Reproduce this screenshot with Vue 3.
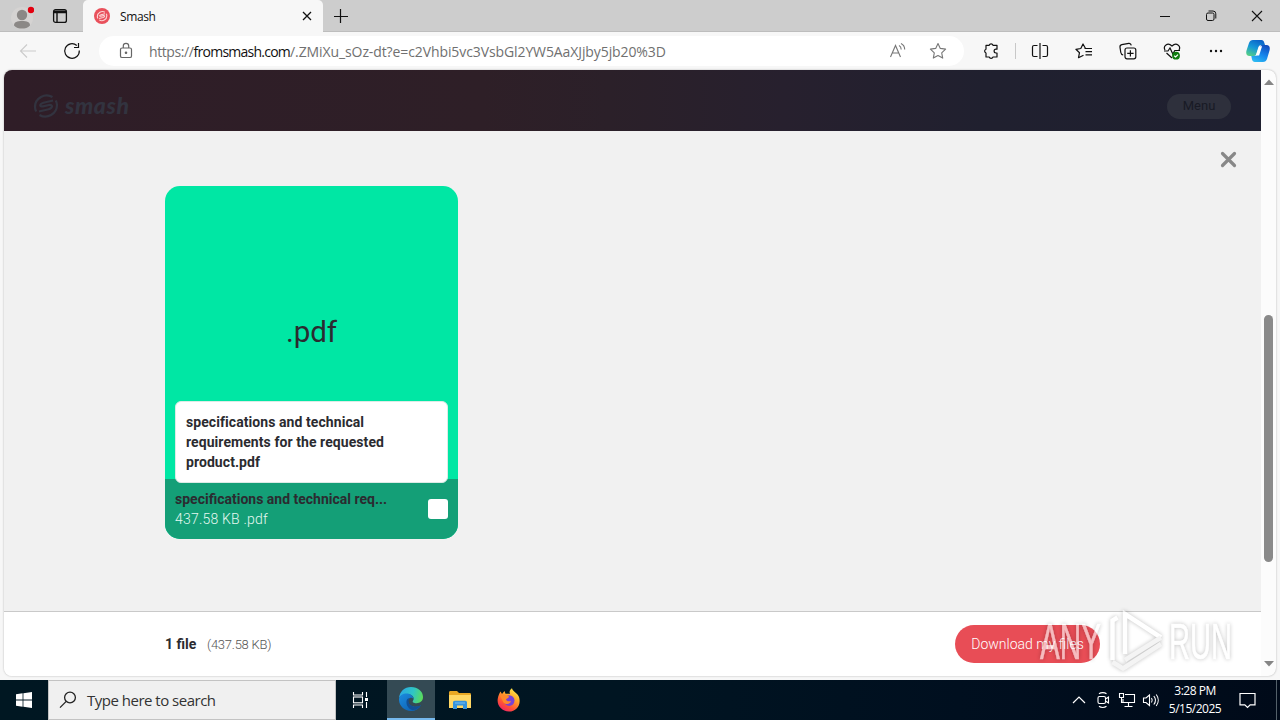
<template>
  <div class="desktop">
    <div class="titlebar">
      <div class="profile">
        <svg width="24" height="28" viewBox="0 0 24 28">
          <circle cx="12" cy="16" r="11" fill="#d5d3d2" />
          <circle cx="12" cy="13" r="5.2" fill="#8b8886" />
          <path d="M4 23.5c0-3.500 3-4.500 8-4.500s8 1 8 4.500c-2 2.500-5 3-8 3s-6-.5-8-3z" fill="#8b8886" />
          <circle cx="21" cy="8" r="3.200" fill="#e3000f" />
        </svg>
      </div>
      <div class="tab-actions">
        <svg width="16" height="16" viewBox="0 0 16 16" fill="none" stroke="#111" stroke-width="1.300">
          <rect x="1.600" y="1.600" width="12.800" height="12.800" rx="2" />
          <path d="M2 3.200h12M2 4.500h12M5 5v9" stroke-width="1.400" />
        </svg>
      </div>
      <div class="tab">
        <svg class="favicon" width="16" height="16" viewBox="0 0 16 16">
          <circle cx="8" cy="8" r="8" fill="#e9505b" />
          <g transform="translate(2.500 2.500) scale(.43)" fill="none" stroke="#fbd5d5" stroke-width="2.600">
            <path d="M19.500 4C12-.5 2 5 2 14c0 1.800.5 3.200 1.300 4.500M6.500 22C14 26.500 24 21 24 12c0-1.800-.5-3.200-1.300-4.500" />
            <path d="M20 7.500l-9.500 2.300C6 11 6.500 14 10 13.300l6-1.300c4-.8 4 3-.5 4.200L6 18.500" />
          </g>
        </svg>
        <span class="tab-title">Smash</span>
        <svg width="10" height="10" viewBox="0 0 10 10" stroke="#111" stroke-width="1.300">
          <path d="M1 1l8 8M9 1l-8 8" />
        </svg>
      </div>
      <svg class="new-tab" width="14" height="14" viewBox="0 0 14 14" stroke="#111" stroke-width="1.200">
        <path d="M6.500 0v14M0 7.500h14" />
      </svg>
      <div class="window-controls">
        <div class="control">
          <svg width="12" height="12" viewBox="0 0 12 12" stroke="#111"><path d="M1 6.500h10" /></svg>
        </div>
        <div class="control">
          <svg width="12" height="12" viewBox="0 0 12 12" fill="none" stroke="#111">
            <rect x="1.500" y="3" width="7.500" height="7.500" rx="1.500" />
            <path d="M3.500 1h4.500a2.800 2.800 0 0 1 2.800 2.800v4.700" />
          </svg>
        </div>
        <div class="control">
          <svg width="12" height="12" viewBox="0 0 12 12" stroke="#111" stroke-width="1.100"><path d="M1 1l10 10M11 1L1 11" /></svg>
        </div>
      </div>
    </div>

    <div class="toolbar">
      <div class="nav-button back">
        <svg width="18" height="16" viewBox="0 0 18 16" fill="none" stroke="#cbcbcb" stroke-width="1.100">
          <path d="M8 1.500L1.500 8 8 14.500M1.500 8h15.500" />
        </svg>
      </div>
      <div class="nav-button">
        <svg width="18" height="18" viewBox="0 0 18 18" fill="none" stroke="#111" stroke-width="1.200">
          <path d="M16.300 8.500a7.300 7.300 0 1 1-2.500-5M15.500 1v4.500H11" />
        </svg>
      </div>
      <div class="address">
        <svg class="lock" width="14" height="18" viewBox="0 0 14 18" fill="none" stroke="#666" stroke-width="1.200">
          <rect x="1.500" y="6" width="11" height="9.500" rx="1.600" />
          <path d="M4.300 6V4a2.700 2.700 0 0 1 5.400 0v2" />
          <circle cx="7" cy="10.700" r=".7" fill="#555" />
        </svg>
        <span class="url"><span class="scheme">https://</span><span class="host">fromsmash.com</span><span class="path">/.ZMiXu_sOz-dt?e=c2Vhbi5vc3VsbGl2YW5AaXJjby5jb20%3D</span></span>
        <svg class="read" width="18" height="18" viewBox="0 0 18 18" fill="none" stroke="#777" stroke-width="1.100">
          <path d="M1.500 15L6.500 3.500 11.500 15M3.200 11h6.600M10 3.500c1.500.7 2.200 2 2.200 4M12 1.500c2.500 1.200 3.700 3.200 3.700 6" />
        </svg>
        <svg width="18" height="18" viewBox="0 0 18 18" fill="none" stroke="#777" stroke-width="1.100" stroke-linejoin="round">
          <path d="M9 1.500l2.300 4.900 5.300.7-3.900 3.700 1 5.300L9 13.500l-4.700 2.600 1-5.300L1.400 7.100l5.300-.7z" />
        </svg>
      </div>
      <div class="tool">
        <svg width="18" height="18" viewBox="0 0 18 18" fill="none" stroke="#111" stroke-width="1.200" stroke-linejoin="round">
          <path d="M4 3.300h3.200a2 2 0 0 1 3.800 0h4v3.900h-1a1.900 1.900 0 0 0 0 3.800h1v4h-4a2 2 0 0 1-3.800 0H4V11a2 2 0 0 1 0-3.800z" />
        </svg>
      </div>
      <div class="separator"></div>
      <div class="tool">
        <svg width="18" height="18" viewBox="0 0 18 18" fill="none" stroke="#111" stroke-width="1.200">
          <path d="M6.500 3.500H3a1.500 1.500 0 0 0-1.500 1.500v8A1.500 1.500 0 0 0 3 14.500h3.500M11.500 3.500H15A1.500 1.500 0 0 1 16.500 5v8a1.500 1.500 0 0 1-1.500 1.500h-3.500M9 1v16" />
        </svg>
      </div>
      <div class="tool">
        <svg width="18" height="18" viewBox="0 0 18 18" fill="none" stroke="#111" stroke-width="1.200" stroke-linejoin="round">
          <path d="M9.500 6.500h1L8 2 5.800 6.500.9 7.300l3.600 3.400-1 5 5-2.500" />
          <path d="M10.500 6.500h6.500M10.500 9.700h6.500M10.500 12.900h6.500" />
        </svg>
      </div>
      <div class="tool">
        <svg width="18" height="18" viewBox="0 0 18 18" fill="none" stroke="#111" stroke-width="1.200">
          <rect x="6" y="6" width="10.800" height="10.800" rx="2" />
          <path d="M4.200 13C2.500 12.700 2 11.700 1.800 10.500L1 5.300C.8 3.800 1.500 3 2.800 2.700l7-1.300c1.400-.2 2.200.5 2.500 2M11.400 8.200v6.400M8.200 11.400h6.400" />
        </svg>
      </div>
      <div class="tool">
        <svg width="18" height="18" viewBox="0 0 18 18" fill="none" stroke="#111" stroke-width="1.200">
          <path d="M2 8C-.2 4 4.500-.2 9 4c4.500-4.200 9.200 0 7 4M1 9h4l2-3 2.800 6 2-3.500H17M3.500 11L9 16" />
          <circle cx="13" cy="13.700" r="3.900" fill="#107c10" stroke="none" />
          <path d="M11.200 13.700l1.400 1.300 2.400-2.400" stroke="#fff" />
        </svg>
      </div>
      <div class="tool">
        <svg width="16" height="4" viewBox="0 0 16 4" fill="#111">
          <circle cx="3" cy="2" r="1.200" /><circle cx="8" cy="2" r="1.200" /><circle cx="13" cy="2" r="1.200" />
        </svg>
      </div>
      <div class="copilot">
        <svg width="24" height="24" viewBox="0 0 24 24">
          <defs>
            <linearGradient id="pilotLeft" x1=".7" y1="0" x2=".2" y2="1">
              <stop offset="0" stop-color="#0a61c8" /><stop offset=".5" stop-color="#1598d8" /><stop offset="1" stop-color="#55cf86" />
            </linearGradient>
            <linearGradient id="pilotRight" x1=".8" y1="0" x2=".3" y2="1">
              <stop offset="0" stop-color="#1149bb" /><stop offset=".55" stop-color="#1686ed" /><stop offset="1" stop-color="#2cb8f1" />
            </linearGradient>
          </defs>
          <path d="M7 1h8.500c1.600 0 2.300 1 2.700 2.500L19 6h-3.500c-2 0-2.800 1-3.400 3l-1.600 5.500c-.6 2-1.500 2.500-3.500 2.500H3.500C.5 17-.3 14.500.5 11.500L3 4c.7-2 2-3 4-3z" fill="url(#pilotLeft)" />
          <path d="M17 23H9c-1.800 0-2.500-1-3-2.500L5.300 17H8c2.500 0 3.300-1 4-3l1.700-5.500C14.300 6.500 15 6 17 6h3.500c3 0 3.800 2.500 3 5.500L21 20c-.7 2-2 3-4 3z" fill="url(#pilotRight)" />
          <path d="M13.200 7.200h2.900l-3 9.200H9.800z" fill="#fff" />
        </svg>
      </div>
    </div>

    <div class="viewport">
      <div class="page">
        <div class="site-header">
          <div class="brand">
            <svg width="26" height="26" viewBox="0 0 26 26" fill="none" stroke="#32333f" stroke-width="2.200">
              <path d="M19.500 4C12-.5 2 5 2 14c0 1.800.5 3.200 1.300 4.500M6.500 22C14 26.500 24 21 24 12c0-1.800-.5-3.200-1.300-4.500" />
              <path d="M20 7.500l-9.500 2.300C6 11 6.500 14 10 13.300l6-1.300c4-.8 4 3-.5 4.200L6 18.500" />
            </svg>
            <span class="brand-name">smash</span>
          </div>
          <div class="menu-button">Menu</div>
        </div>
        <div class="preview">
          <svg class="close-preview" width="17" height="17" viewBox="0 0 17 17" stroke="#888" stroke-width="3.200" stroke-linecap="round">
            <path d="M2.500 2.500l12 12M14.500 2.500l-12 12" />
          </svg>
          <div class="file-card">
            <div class="thumb">
              <span class="extension">.{{ file.type }}</span>
            </div>
            <div class="file-info">
              <div class="file-text">
                <div class="file-name">specifications and technical req...</div>
                <div class="file-size">{{ file.size }} .{{ file.type }}</div>
              </div>
              <div class="checkbox"></div>
            </div>
            <div class="tooltip">
              <div v-for="line in file.nameLines" :key="line">{{ line }}</div>
            </div>
          </div>
        </div>
        <div class="download-bar">
          <div class="count">1 file</div>
          <div class="total">({{ file.size }})</div>
          <div class="download-button">Download my files</div>
        </div>
      </div>
      <div class="scrollbar">
        <svg width="10" height="6" viewBox="0 0 10 6"><path d="M0 6l5-5.500L10 6z" fill="#858585" /></svg>
        <div class="scroll-thumb"></div>
        <svg width="10" height="6" viewBox="0 0 10 6"><path d="M0 0l5 5.500L10 0z" fill="#858585" /></svg>
      </div>
    </div>

    <div class="taskbar">
      <div class="start">
        <svg width="16" height="16" viewBox="0 0 16 16" fill="#fff">
          <path d="M0 2.200L6.600 1.300v6.300H0zM7.400 1.200L16 0v7.600H7.400zM0 8.400h6.600v6.300L0 13.800zM7.400 8.400H16V16l-8.600-1.200z" />
        </svg>
      </div>
      <div class="search">
        <svg width="18" height="18" viewBox="0 0 18 18" fill="none" stroke="#222" stroke-width="1.300">
          <circle cx="11" cy="6.500" r="5.400" /><path d="M7.200 10.400L1 16.600" />
        </svg>
        <span>Type here to search</span>
      </div>
      <div class="task">
        <svg width="17" height="16" viewBox="0 0 17 16" fill="none" stroke="#fff" stroke-width="1.100">
          <path d="M1.500 0v3h9V0M1.500 16v-3h9v3M14.500 0v5M14.500 10v6" />
          <rect x="1.500" y="5" width="9" height="5.800" />
          <rect x="13" y="6" width="3" height="3" fill="#fff" stroke="none" />
        </svg>
      </div>
      <div class="task active">
        <svg width="24" height="24" viewBox="0 0 24 24">
          <defs>
            <linearGradient id="edgeTop" x1="0" y1=".4" x2="1" y2=".6">
              <stop offset="0" stop-color="#2aa8e4" /><stop offset=".55" stop-color="#2fc5c5" /><stop offset="1" stop-color="#5bdc57" />
            </linearGradient>
            <linearGradient id="edgeLow" x1="0" y1="0" x2="1" y2="1">
              <stop offset="0" stop-color="#1b8ce0" /><stop offset="1" stop-color="#0b59a8" />
            </linearGradient>
          </defs>
          <path d="M0 11C.7 4.500 5.500 0 12 0c7 0 12 4.500 12 10 0 4-3 6.200-6.500 6.200-2.800 0-4.500-1-3.500-2.500C17 9 10 5.500 5 7.500 2.500 8.500.8 9.500 0 11z" fill="url(#edgeTop)" />
          <path d="M0 12c.3-3.500 4-5.500 7.500-5.500 4 0 7 2.500 7 5.500-1-1-2.500-1.600-4-.8-3 2-1.500 8 5 8.500 3 .2 5-.7 6.600-1.700C20 22 16.500 24 12 24 5 24-.3 18.500 0 12z" fill="url(#edgeLow)" />
          <path d="M7.500 14c.2-1.800 1.500-3 3-2.800-2.500 3 0 8.500 6 8.500 2.500 0 4-.7 5.600-1.700C20 21 17 23 14 23c-4.500-.5-7-5-6.500-9z" fill="#124f94" />
        </svg>
      </div>
      <div class="task">
        <svg width="22" height="20" viewBox="0 0 22 20">
          <path d="M0 2.500C0 1.600.5 1 1.500 1H8l2 2h10.500c1 0 1.500.5 1.500 1.500V18H0z" fill="#e9a824" />
          <path d="M0 5h22v13H0z" fill="#ffd764" />
          <path d="M4 19v-6.500c0-1 .7-1.700 1.700-1.700h10.600c1 0 1.700.7 1.700 1.700V19h-4v-3.500H8V19z" fill="#3593dc" />
          <path d="M6 13h10" stroke="#77bdf0" />
        </svg>
      </div>
      <div class="task">
        <svg width="24" height="24" viewBox="0 0 24 24">
          <defs>
            <linearGradient id="foxBody" x1=".8" y1="0" x2=".2" y2="1">
              <stop offset="0" stop-color="#fff14d" /><stop offset=".35" stop-color="#ffa92b" /><stop offset=".7" stop-color="#ff5235" /><stop offset="1" stop-color="#ed1d6c" />
            </linearGradient>
          </defs>
          <path d="M3.500 3.500L5 6l2.500-3 1 2.700c2 0 3.300-.2 4.500.3C12 3.500 13 1.500 15 .3c.3 3 5.500 4.700 7 8.700C24.500 16.500 19.500 23.500 12 23.500S-.5 17 .8 10.500C1.300 7.500 2.300 5.500 3.500 3.500z" fill="url(#foxBody)" />
          <circle cx="12.200" cy="12.600" r="5.300" fill="#7742d6" />
          <path d="M3 7.500c2-1.500 4.500-1.200 6 0l3 .7c0 2-2.500 2-3 3.500 1 1.500 3 2 5 1.300-1 3.500-5 4-7.500 1.500z" fill="#ff8a2a" />
        </svg>
      </div>
      <div class="tray">
        <svg width="24" height="18" viewBox="0 0 24 18" fill="none" stroke="#fff" stroke-width="1.200"><path d="M6 12l6-6 6 6" /></svg>
        <svg width="24" height="18" viewBox="0 0 24 18" fill="none" stroke="#fff" stroke-width="1.100">
          <rect x="7" y="5.500" width="7.500" height="7" rx="1.500" />
          <path d="M14.500 8l3-2v6l-3-2M8 2.700c2-1.500 5.500-1.500 7.500 0M8 15.300c2 1.500 5.500 1.500 7.500 0" />
        </svg>
        <svg width="24" height="18" viewBox="0 0 24 18" fill="none" stroke="#fff" stroke-width="1.100">
          <path d="M10 3.500h9.500v8H8V8M13.500 11.500V15M9.500 15.500h8M4.500 2.500h4v4h-4zM6.500 6.500v5H8" />
        </svg>
        <svg width="24" height="18" viewBox="0 0 24 18" fill="none" stroke="#fff" stroke-width="1.100">
          <path d="M4.500 7v4.500H7l3.500 3V4L7 7zM12.500 7c1 1.500 1 3 0 4.500M14.800 5c2 2.500 2 6 0 8.500M17.200 3.500c2.700 3.300 2.700 8 0 11.500" />
        </svg>
        <div class="clock">
          <div>3:28 PM</div>
          <div class="date">5/15/2025</div>
        </div>
        <svg class="notice" width="17" height="17" viewBox="0 0 17 17" fill="none" stroke="#fff" stroke-width="1.200">
          <path d="M1 1.500h15v11.300h-4.800L8.500 15.500l-2.700-2.700H1z" />
        </svg>
        <div class="show-desktop"></div>
      </div>
    </div>

    <svg class="watermark" width="240" height="78" viewBox="0 0 240 78">
      <text x="10" y="57" textLength="61" lengthAdjust="spacingAndGlyphs">ANY</text>
      <text x="139" y="57" textLength="63" lengthAdjust="spacingAndGlyphs">RUN</text>
      <path class="play-bright" d="M82.500 58V18.500l5-3M95 52V12l36 23.500" />
      <path class="play-dim" d="M95 58l36-22.500M82.500 60l10.500 6.500L131 42" />
    </svg>
  </div>
</template>

<script setup>
const file = {
  size: '437.58 KB',
  type: 'pdf',
  nameLines: [
    'specifications and technical',
    'requirements for the requested',
    'product.pdf'
  ]
}
</script>

<style>
body {
  margin: 0;
  overflow: hidden;
}
</style>

<style scoped>
.desktop {
  width: 1280px;
  height: 720px;
  display: flex;
  flex-direction: column;
  position: relative;
  background: #f7f7f7;
  font-family: Roboto, "Liberation Sans", sans-serif;
  color: #2b2b30;
}

.desktop div {
  box-sizing: border-box;
}

svg {
  display: block;
  flex-shrink: 0;
}

/* Browser chrome */
.titlebar {
  height: 32px;
  display: flex;
  align-items: center;
  background: #cdcdcd;
  border-bottom: 1px solid #bdbdbd;
}

.profile {
  width: 44px;
  display: flex;
  justify-content: center;
}

.tab-actions {
  width: 39px;
  padding-left: 8px;
}

.tab {
  width: 240px;
  height: 32px;
  margin-bottom: -1px;
  display: flex;
  align-items: center;
  padding: 0 11px;
  background: #f7f7f7;
  border-radius: 5px 5px 0 0;
}

.tab-title {
  flex: 1;
  padding-left: 10px;
  font: 12px "Open Sans", sans-serif;
  letter-spacing: -0.4px;
  color: #111;
}

.new-tab {
  margin-left: 11px;
}

.window-controls {
  margin-left: auto;
  display: flex;
}

.control {
  width: 46px;
  display: flex;
  justify-content: center;
}

.toolbar {
  height: 38px;
  display: flex;
  align-items: center;
}

.nav-button {
  width: 44px;
  display: flex;
  justify-content: center;
}

.back {
  width: 50px;
  padding-left: 6px;
}

.address {
  width: 865px;
  height: 30px;
  margin-left: 5px;
  margin-right: 5px;
  padding: 0 17px 0 20px;
  display: flex;
  align-items: center;
  background: #fff;
  border-radius: 15px;
}

.url {
  flex: 1;
  padding-left: 16px;
  font: 14px "Open Sans", sans-serif;
  color: #707070;
  white-space: nowrap;
}

.scheme {
  letter-spacing: -0.4px;
}

.host {
  letter-spacing: -0.75px;
  color: #111;
}

.path {
  letter-spacing: -0.1px;
}

.read {
  margin-right: 22px;
}

.tool {
  width: 44px;
  display: flex;
  justify-content: center;
}

.separator {
  width: 1px;
  height: 16px;
  margin: 0 2px;
  background: #c8c8c8;
}

.copilot {
  margin-left: 8px;
}

/* Web page */
.viewport {
  height: 606px;
  margin: 0 4px 4px;
  display: flex;
  overflow: hidden;
  border-radius: 8px;
  background: #fcfcfc;
  box-shadow: 0 0 2px #aaa;
}

.page {
  width: 1257px;
  display: flex;
  flex-direction: column;
}

.site-header {
  height: 61px;
  display: flex;
  align-items: center;
  justify-content: space-between;
  padding: 11px 30px 0 29px;
  background: linear-gradient(90deg, #2f1d27 0%, #2e1f27 38%, #2b2029 48%, #27202e 62%, #20202f 78%, #1f2030 100%);
}

.brand {
  display: flex;
  align-items: center;
  gap: 6px;
}

.brand-name {
  font: italic 900 23px/22px Lato, sans-serif;
  letter-spacing: 0.6px;
  color: #32333f;
  margin-top: -3px;
}

.menu-button {
  width: 64px;
  height: 25px;
  border-radius: 13px;
  background: #2e303c;
  color: #181a25;
  font-size: 13px;
  line-height: 24px;
  text-align: center;
}

.preview {
  height: 480px;
  padding: 55px 24px 0 161px;
  display: flex;
  flex-direction: row-reverse;
  justify-content: space-between;
  background: #f1f1f1;
}

.close-preview {
  margin-top: -35px;
}

.file-card {
  width: 293px;
  height: 353px;
  position: relative;
  border-radius: 15px;
  overflow: hidden;
  background: #00e7a4;
}

.thumb {
  height: 293px;
  padding-bottom: 2px;
  display: flex;
  align-items: center;
  justify-content: center;
}

.extension {
  font-size: 29.5px;
  line-height: 36px;
}

.file-info {
  height: 60px;
  padding: 0 10px;
  display: flex;
  align-items: center;
  justify-content: space-between;
  background: #149f77;
}

.file-name {
  font-size: 14px;
  font-weight: 700;
  line-height: 20px;
}

.file-size {
  font-size: 14px;
  line-height: 20px;
  font-weight: 300;
  letter-spacing: 0.2px;
  color: #e4f8f1;
}

.checkbox {
  width: 20px;
  height: 20px;
  border-radius: 3px;
  background: #fff;
}

.tooltip {
  position: absolute;
  left: 10px;
  bottom: 56px;
  width: 273px;
  height: 82px;
  padding: 10px;
  border: 1px solid #dcebe6;
  border-radius: 6px;
  background: #fff;
  font-size: 14px;
  font-weight: 700;
  line-height: 20px;
  letter-spacing: 0.07px;
}

.download-bar {
  height: 65px;
  display: flex;
  align-items: center;
  padding: 0 161px;
  border-top: 1px solid #c9c9c9;
  background: #fff;
}

.count {
  width: 42px;
  font-size: 14px;
  font-weight: 700;
}

.total {
  font-size: 13px;
  font-weight: 300;
  letter-spacing: -0.25px;
  color: #555;
}

.download-button {
  width: 145px;
  height: 38px;
  margin-left: auto;
  border-radius: 19px;
  background: #e84d56;
  color: #fff;
  font-size: 14px;
  font-weight: 300;
  line-height: 38px;
  text-align: center;
}

.scrollbar {
  width: 15px;
  display: flex;
  flex-direction: column;
  align-items: center;
  justify-content: space-between;
  padding: 9px 0;
}

.scroll-thumb {
  width: 9px;
  height: 247px;
  margin-top: 130px;
  border-radius: 5px;
  background: #8a8a8a;
}

/* Windows taskbar */
.taskbar {
  height: 40px;
  display: flex;
  background: linear-gradient(90deg, #001722 0%, #001522 48%, #000f1f 75%, #000a19 100%);
}

.start {
  width: 48px;
  display: flex;
  align-items: center;
  justify-content: center;
}

.search {
  width: 288px;
  display: flex;
  align-items: center;
  gap: 10px;
  padding-left: 10px;
  background: #f0f0f0;
  border: 1px solid #c3c3c3;
  font: 15px "Open Sans", sans-serif;
  letter-spacing: -0.5px;
  color: #333;
}

.task {
  width: 49px;
  display: flex;
  align-items: center;
  justify-content: center;
}

.task.active {
  width: 48px;
  margin-left: 2px;
  background: #344a54;
  border-bottom: 2px solid #76b9ed;
}

.tray {
  margin-left: auto;
  display: flex;
  align-items: center;
  color: #fff;
}

.clock {
  width: 64px;
  font: 12px/18px "Open Sans", sans-serif;
  letter-spacing: -0.5px;
  text-align: center;
  white-space: nowrap;
}

.notice {
  margin: 0 20px 0 12px;
}

.show-desktop {
  width: 4px;
  height: 40px;
  border-left: 1px solid #536069;
}

/* Translucent overlay logo */
.watermark {
  position: absolute;
  left: 1030px;
  top: 602px;
  font: 50px "Liberation Sans", sans-serif;
  fill: #fff;
  opacity: 0.62;
  filter: drop-shadow(0 0 2px rgba(0, 0, 0, 0.4));
}

.watermark text {
  stroke: #fff;
  stroke-width: 0.6;
}

.play-bright {
  fill: none;
  stroke: #fff;
  stroke-width: 4.5;
}

.play-dim {
  fill: none;
  stroke: #eee;
  stroke-width: 4.5;
}
</style>
